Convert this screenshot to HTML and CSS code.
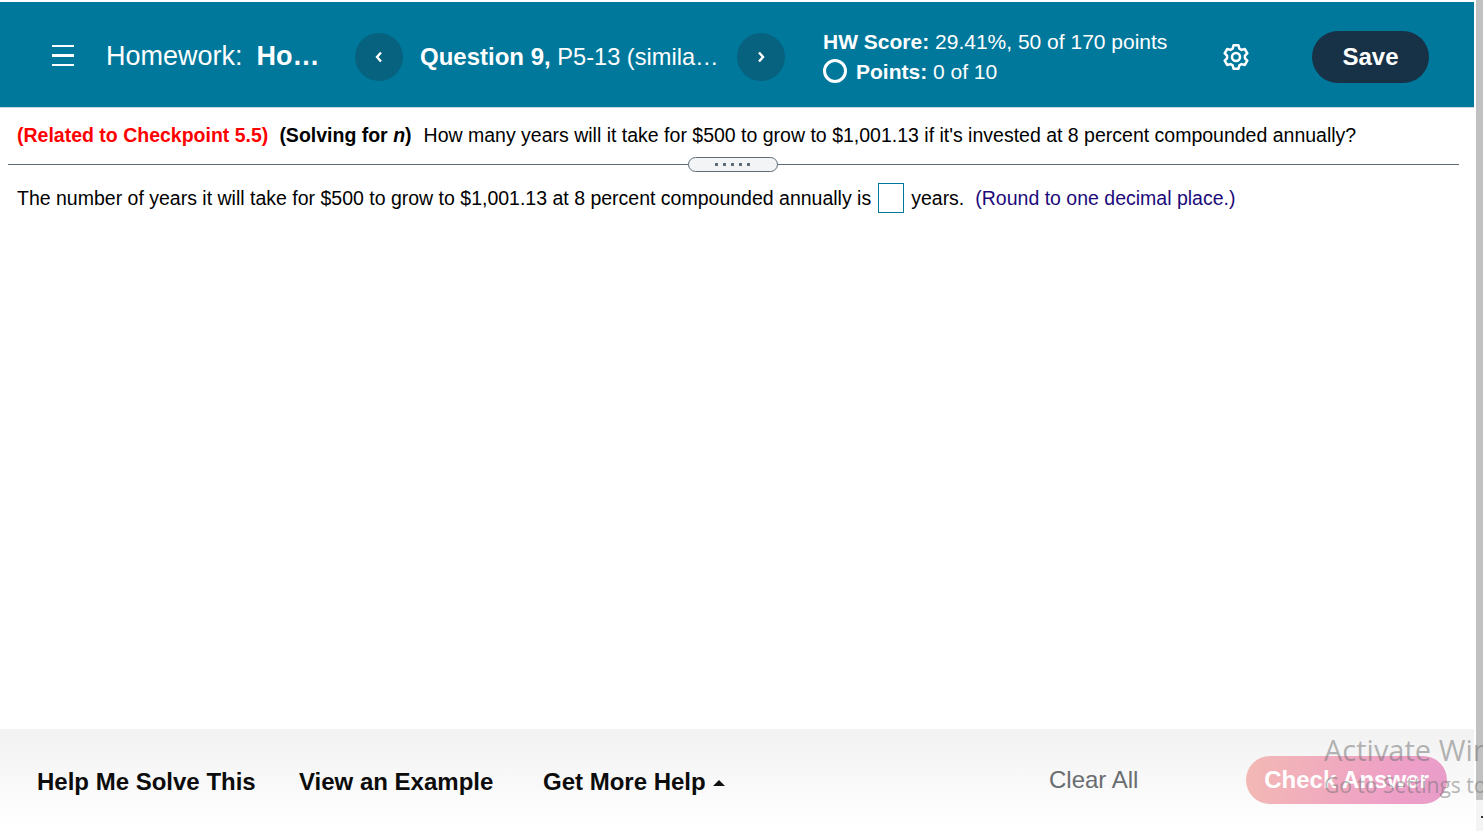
FILE: index.html
```html
<!DOCTYPE html>
<html lang="en">
<head>
<meta charset="utf-8">
<title>Homework</title>
<link rel="stylesheet" href="styles.css">
</head>
<body>
<div class="app">
  <header class="topbar">
    <button class="menu" aria-label="Menu"><span></span><span></span><span></span></button>
    <div class="hw-title">Homework:<b class="hw-name">Ho…</b></div>
    <button class="nav nav-prev" aria-label="Previous">
      <svg width="10" height="12" viewBox="0 0 10 12"><path d="M7 1.5 L3 6 L7 10.5" fill="none" stroke="#fff" stroke-width="2.4"/></svg>
    </button>
    <div class="question"><b>Question 9,</b> <span class="q-name">P5-13 (simila…</span></div>
    <button class="nav nav-next" aria-label="Next">
      <svg width="10" height="12" viewBox="0 0 10 12"><path d="M3 1.5 L7 6 L3 10.5" fill="none" stroke="#fff" stroke-width="2.4"/></svg>
    </button>
    <div class="score">
      <div class="score-line"><b>HW Score:</b> 29.41%, 50 of 170 points</div>
      <div class="score-line points"><span class="ring"></span><span><b>Points:</b> 0 of 10</span></div>
    </div>
    <button class="gear" aria-label="Settings">
      <svg width="26" height="26" viewBox="0 0 24 24" fill="none" stroke="#fff" stroke-width="2.3" stroke-linejoin="round"><circle cx="12" cy="12" r="3.7"/><path d="M8.89 4.3 9.71 1.24H14.29L15.11 4.3 17.11 5.46 20.17 4.64 22.46 8.6 20.22 10.84V13.16L22.46 15.4 20.17 19.36 17.11 18.54 15.11 19.7 14.29 22.76H9.71L8.89 19.7 6.89 18.54 3.83 19.36 1.54 15.4 3.78 13.16V10.84L1.54 8.6 3.83 4.64 6.89 5.46Z"/></svg>
    </button>
    <button class="save">Save</button>
  </header>

  <main class="content">
    <p class="prompt"><span class="related">(Related to Checkpoint 5.5)</span><b class="solving">(Solving for <i>n</i>)</b>How many years will it take for $500 to grow to $1,001.13 if it's invested at 8 percent compounded annually?</p>
    <div class="divider"><div class="grip"><i></i><i></i><i></i><i></i><i></i></div></div>
    <p class="answer">The number of years it will take for $500 to grow to $1,001.13 at 8 percent compounded annually is<span class="blank"></span>years.<span class="hint">(Round to one decimal place.)</span></p>
  </main>

  <footer class="actions">
    <a class="act act-solve">Help Me Solve This</a>
    <a class="act act-example">View an Example</a>
    <a class="act act-more">Get More Help<span class="caret"></span></a>
    <a class="clear">Clear All</a>
    <button class="check">Check Answer</button>
  </footer>
</div>
<div class="scrollbar"><div class="thumb"></div><div class="arrow"></div></div>
<div class="watermark"><div class="wm-1">Activate Windows</div><div class="wm-2">Go to Settings to activate Windows.</div></div>
</body>
</html>
```

FILE: styles.css
```css
* { box-sizing: border-box; }
html, body { height: 100%; }
body {
  margin: 0;
  display: flex;
  overflow: hidden;
  position: relative;
  background: #fff;
  color: #000;
  font-family: "Liberation Sans", Arial, sans-serif;
}
button { font-family: inherit; border: 0; padding: 0; cursor: pointer; }
.app { width: 1474px; height: 831px; display: flex; flex-direction: column; padding-top: 2px; }

.topbar {
  height: 105px;
  flex: none;
  padding-top: 4px;
  background: #00789c;
  color: #fff;
  display: flex;
  align-items: center;
  box-shadow: 0 1px 0 #c9d6de;
}
.menu {
  width: 22px; margin: 0 0 2px 52px; background: none;
  display: flex; flex-direction: column; gap: 7px;
}
.menu span { display: block; height: 2.5px; background: #fff; }
.hw-title { font-size: 27px; margin: 0 0 0 32px; width: 249px; white-space: nowrap; }
.hw-name { margin-left: 14px; }
.nav { width: 48px; height: 48px; border-radius: 50%; background: #06627f; display: flex; align-items: center; justify-content: center; flex: none; }
.question { font-size: 24px; margin-left: 17px; width: 317px; white-space: nowrap; }
.q-name { font-size: 23.6px; }
.score { margin: 0 0 1px 38px; width: 385px; font-size: 21px; }
.score-line { height: 29px; line-height: 29px; white-space: nowrap; }
.points { display: flex; align-items: center; gap: 9px; margin-top: 1px; }
.ring { width: 24px; height: 24px; border: 3px solid #fff; border-radius: 50%; }
.gear { background: none; width: 28px; height: 26px; margin-left: 14px; display: flex; justify-content: center; }
.save { width: 117px; height: 52px; margin-left: 62px; border-radius: 26px; background: #173247; color: #fff; font-size: 24px; font-weight: 700; }

.content { flex: 1; min-height: 0; }
.prompt, .answer { margin: 0; font-size: 19.5px; white-space: nowrap; }
.prompt { padding: 17px 0 0 17px; line-height: 23px; height: 50px; }
.related { color: #f00; font-weight: 700; margin-right: 11px; }
.solving { margin-right: 12px; }
.divider { height: 15px; margin: 0 15px 0 8px; position: relative; display: flex; justify-content: center; padding-right: 2px; }
.divider::before { content: ""; position: absolute; left: 0; right: 0; top: 7px; height: 1px; background: #5f6b76; }
.grip {
  position: relative; width: 90px; height: 15px; border: 1px solid #5f6b76; border-radius: 8px;
  background: #f3f4f6; display: flex; align-items: center; justify-content: center; gap: 5px;
}
.grip i { width: 3px; height: 3px; background: #5f6b76; }
.answer { padding-left: 17px; display: flex; align-items: center; height: 30px; margin-top: 11px; }
.blank { width: 26px; height: 30px; border: 1px solid #00789c; margin: 0 7px 0 7px; flex: none; }
.hint { color: #1c0a7a; margin-left: 11px; }

.actions {
  height: 102px; flex: none;
  background: linear-gradient(#f2f2f2, #fff);
  display: flex; align-items: center;
  padding-left: 37px;
}
.act { font-size: 24px; font-weight: 700; color: #0c0c0c; white-space: nowrap; margin-top: 3px; }
.act-solve { width: 262px; }
.act-example { width: 244px; }
.act-more { width: 506px; display: flex; align-items: center; }
.caret { width: 0; height: 0; margin: 2px 0 0 7px; border: 6px solid transparent; border-top: 0; border-bottom: 6px solid #111; }
.clear { font-size: 24px; color: #6a6d70; width: 197px; }
.check {
  width: 201px; height: 48px; border-radius: 24px; font-size: 24px; font-weight: 700; color: #fff;
  background: linear-gradient(100deg, #f3b9b4, #ee9fc7 75%, #e79dc9);
}

.scrollbar { width: 9px; height: 831px; flex: none; background: #f4f4f4; position: relative; border-left: 2px solid #fff; }
.thumb { height: 800px; background: #c1c1c1; }
.arrow { position: absolute; right: 0; top: 816px; width: 2px; height: 2px; background: #333; }

.watermark { position: absolute; left: 1324px; top: 733px; width: 159px; overflow: hidden; white-space: nowrap; color: rgba(110,110,110,.5); font-family: "Open Sans", sans-serif; pointer-events: none; }
.wm-1 { font-size: 29px; line-height: 34px; }
.wm-2 { font-size: 21px; line-height: 28px; margin-top: 4px; }
```
